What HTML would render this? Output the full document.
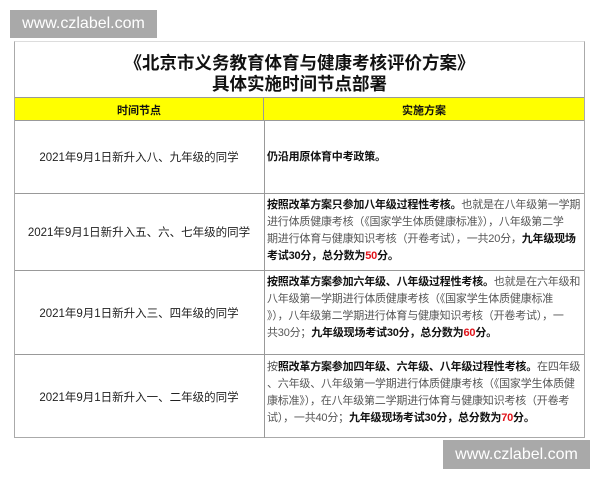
<!DOCTYPE html>
<html><head><meta charset="utf-8"><style>
body{margin:0;width:600px;height:480px;background:#fff;position:relative;overflow:hidden;font-family:"Liberation Sans","Noto Sans CJK SC",sans-serif;}
.wm{position:absolute;background:#a9a9a9;color:#fff;font-size:16px;line-height:28px;text-align:center;}
.tbl{position:absolute;left:14px;top:41px;width:571px;height:397px;border:1px solid #aaa;border-top:1px solid #ddd;box-sizing:border-box;}
.t{position:absolute;left:0;width:100%;text-align:center;font-weight:bold;font-size:17.5px;color:#111;line-height:22px;}
.hdr{position:absolute;left:0;top:55px;width:100%;height:24px;background:#ffff00;border-top:1px solid #999;border-bottom:1px solid #999;box-sizing:border-box;}
.hl{position:absolute;left:248px;top:0;bottom:0;border-left:1px solid #999;}
.h{position:absolute;top:4px;font-size:11px;font-weight:bold;text-align:center;color:#111;}
.row{position:absolute;left:0;width:100%;border-bottom:1px solid #999;box-sizing:border-box;}
.l{position:absolute;left:0;width:248px;top:50%;transform:translateY(-50%);text-align:center;font-size:11.5px;color:#222;}
.r{position:absolute;left:249px;right:0;top:0;bottom:0;border-left:1px solid #999;padding:3px 0 0 2px;font-size:11px;line-height:17px;color:#555;white-space:nowrap;letter-spacing:-0.2px;}
b{color:#111}
.red{color:#e0141b}
</style></head><body>
<div class="wm" style="left:10px;top:10px;width:147px;height:28px;">www.czlabel.com</div>
<div class="tbl">
<div class="t" style="top:10px;">《北京市义务教育体育与健康考核评价方案》</div>
<div class="t" style="top:31px;">具体实施时间节点部署</div>
<div class="hdr"><div class="h" style="left:0;width:248px;">时间节点</div><div class="hl"></div><div class="h" style="left:249px;right:0;">实施方案</div></div>
<div class="row" style="top:79px;height:73px;"><div class="l">2021年9月1日新升入八、九年级的同学</div><div class="r" style="padding-top:28px;"><b>仍沿用原体育中考政策。</b></div></div>
<div class="row" style="top:152px;height:77px;"><div class="l">2021年9月1日新升入五、六、七年级的同学</div><div class="r"><b>按照改革方案只参加八年级过程性考核。</b>也就是在八年级第一学期<br>进行体质健康考核（《国家学生体质健康标准》），八年级第二学<br>期进行体育与健康知识考核（开卷考试），一共20分，<b>九年级现场</b><br><b>考试30分，总分数为<span class="red">50</span>分。</b></div></div>
<div class="row" style="top:229px;height:84px;"><div class="l">2021年9月1日新升入三、四年级的同学</div><div class="r"><b>按照改革方案参加六年级、八年级过程性考核。</b>也就是在六年级和<br>八年级第一学期进行体质健康考核（《国家学生体质健康标准<br>》），八年级第二学期进行体育与健康知识考核（开卷考试），一<br>共30分；<b>九年级现场考试30分，总分数为<span class="red">60</span>分。</b></div></div>
<div class="row" style="top:313px;height:83px;border-bottom:none;"><div class="l">2021年9月1日新升入一、二年级的同学</div><div class="r" style="padding-top:4px;">按<b>照改革方案参加四年级、六年级、八年级过程性考核。</b>在四年级<br>、六年级、八年级第一学期进行体质健康考核（《国家学生体质健<br>康标准》），在八年级第二学期进行体育与健康知识考核（开卷考<br>试），一共40分；<b>九年级现场考试30分，总分数为<span class="red">70</span>分。</b></div></div>
</div>
<div class="wm" style="left:443px;top:440px;width:147px;height:29px;line-height:29px;">www.czlabel.com</div>
</body></html>
